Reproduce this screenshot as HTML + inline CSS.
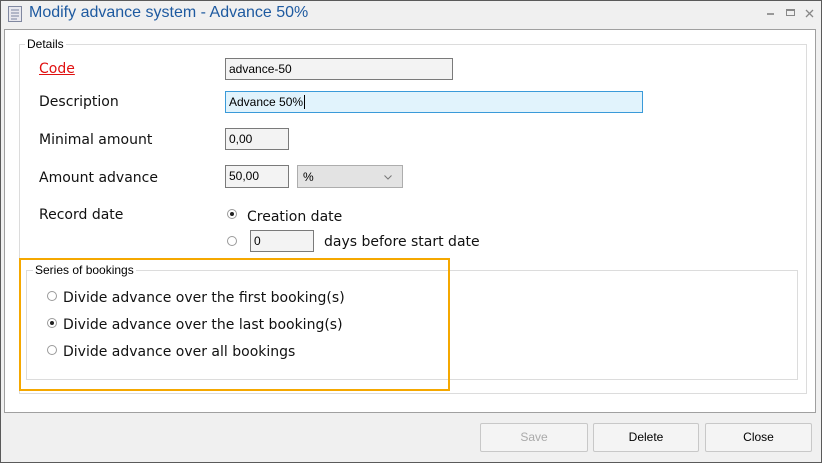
<!DOCTYPE html>
<html><head><meta charset="utf-8"><style>
*{box-sizing:border-box;margin:0;padding:0}
body{width:822px;height:463px;background:#f0f0f0;font-family:"Liberation Sans",Tahoma,sans-serif;position:relative;overflow:hidden;color:#000}
.a{position:absolute}
.win{left:0;top:0;width:822px;height:463px;border:1px solid #5a5a5a;background:#f0f0f0}
.title{left:29px;top:4px;font-size:16px;color:#1e5aa0}
.panel{left:4px;top:29px;width:812px;height:384px;border:1px solid #a0a0a0;background:#fff}
.gb{border:1px solid #dcdcdc}
.lg{background:#fff;font-size:12px;padding:0 2px}
.lbl{font-size:14px;font-family:"DejaVu Sans",sans-serif;color:#111;margin-top:1px}
.inp{background:#f3f3f3;border:1px solid #7a7a7a;font-size:12px;padding:3px 0 0 3px}
.rad{width:10px;height:10px;border:1px solid #9a9a9a;border-radius:50%;background:#fff}
.rad.on::after{content:"";position:absolute;left:2px;top:2px;width:4px;height:4px;border-radius:50%;background:#222}
.btn{border:1px solid #c8c8c8;background:#f4f4f4;font-size:12px;text-align:center;line-height:26px;border-radius:2px}
</style></head><body>
<div class="a win"></div>
<svg class="a" style="left:8px;top:6px" width="14" height="16"><rect x="0.5" y="0.5" width="13" height="15" fill="#e8e8ee" stroke="#8088a0"/><g stroke="#7a84a0"><line x1="3" y1="4" x2="11" y2="4"/><line x1="3" y1="7" x2="11" y2="7"/><line x1="3" y1="10" x2="11" y2="10"/><line x1="3" y1="13" x2="9" y2="13"/></g></svg>
<div class="a title">Modify advance system - Advance 50%</div>
<div class="a" style="left:767px;top:13px;width:7px;height:2px;background:#999"></div>
<div class="a" style="left:786px;top:9px;width:9px;height:7px;border:1px solid #888;border-top-width:2px"></div>
<svg class="a" style="left:805px;top:9px" width="9" height="9"><path d="M1 1L8 8M8 1L1 8" stroke="#888" stroke-width="1.3"/></svg>
<div class="a panel"></div>
<div class="a gb" style="left:19px;top:44px;width:788px;height:350px"></div>
<div class="a lg" style="left:25px;top:37px">Details</div>
<div class="a lbl" style="left:39px;top:60px;color:#e01010;text-decoration:underline">Code</div>
<div class="a lbl" style="left:39px;top:93px">Description</div>
<div class="a lbl" style="left:39px;top:131px">Minimal amount</div>
<div class="a lbl" style="left:39px;top:169px">Amount advance</div>
<div class="a lbl" style="left:39px;top:206px">Record date</div>
<div class="a inp" style="left:225px;top:58px;width:228px;height:22px">advance-50</div>
<div class="a inp" style="left:225px;top:91px;width:418px;height:22px;background:#e1f3fc;border-color:#3a9ad9">Advance 50%<span style="border-left:1px solid #000;margin-left:1px"></span></div>
<div class="a inp" style="left:225px;top:128px;width:64px;height:22px">0,00</div>
<div class="a inp" style="left:225px;top:165px;width:64px;height:23px">50,00</div>
<div class="a inp" style="left:297px;top:165px;width:106px;height:23px;background:#e3e3e3;border-color:#adadad;padding:4px 0 0 5px">%<svg style="position:absolute;right:10px;top:9px" width="8" height="5"><path d="M0.5 0.5L4 4L7.5 0.5" fill="none" stroke="#777"/></svg></div>
<div class="a rad on" style="left:227px;top:209px"></div>
<div class="a lbl" style="left:247px;top:208px">Creation date</div>
<div class="a rad" style="left:227px;top:236px"></div>
<div class="a inp" style="left:250px;top:230px;width:64px;height:22px">0</div>
<div class="a lbl" style="left:324px;top:233px">days before start date</div>
<div class="a gb" style="left:26px;top:270px;width:772px;height:110px"></div>
<div class="a lg" style="left:33px;top:263px">Series of bookings</div>
<div class="a rad" style="left:47px;top:291px"></div>
<div class="a lbl" style="left:63px;top:289px">Divide advance over the first booking(s)</div>
<div class="a rad on" style="left:47px;top:318px"></div>
<div class="a lbl" style="left:63px;top:316px">Divide advance over the last booking(s)</div>
<div class="a rad" style="left:47px;top:345px"></div>
<div class="a lbl" style="left:63px;top:343px">Divide advance over all bookings</div>
<div class="a" style="left:19px;top:258px;width:431px;height:133px;border:2px solid #f5a800"></div>
<div class="a btn" style="left:480px;top:423px;width:108px;height:29px;color:#aaa">Save</div>
<div class="a btn" style="left:593px;top:423px;width:106px;height:29px">Delete</div>
<div class="a btn" style="left:705px;top:423px;width:107px;height:29px">Close</div>
</body></html>
